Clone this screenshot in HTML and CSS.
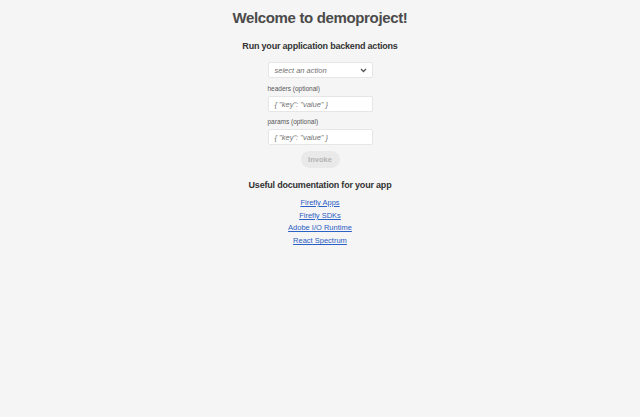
FILE: index.html
```html
<!DOCTYPE html>
<html>
<head>
<meta charset="utf-8">
<link rel="stylesheet" href="styles.css">
</head>
<body>
<main class="page">
  <h1 class="title">Welcome to demoproject!</h1>
  <h2 class="subtitle">Run your application backend actions</h2>
  <form class="form">
    <div class="select">
      <span class="placeholder">select an action</span>
      <svg class="chev" width="7" height="5" viewBox="0 0 7 5"><path d="M1 1l2.5 2.5L6 1" fill="none" stroke="#555" stroke-width="1.3"/></svg>
    </div>
    <label class="label first">headers (optional)</label>
    <div class="input"><span class="placeholder">{ "key": "value" }</span></div>
    <label class="label">params (optional)</label>
    <div class="input"><span class="placeholder">{ "key": "value" }</span></div>
    <button class="btn" type="button">Invoke</button>
  </form>
  <h2 class="subtitle docs">Useful documentation for your app</h2>
  <ul class="links">
    <li><a href="#">Firefly Apps</a></li>
    <li><a href="#">Firefly SDKs</a></li>
    <li><a href="#">Adobe I/O Runtime</a></li>
    <li><a href="#">React Spectrum</a></li>
  </ul>
</main>
</body>
</html>
```

FILE: styles.css
```css
html, body {
  margin: 0;
  padding: 0;
  background: #f5f5f5;
  font-family: "Liberation Sans", Arial, sans-serif;
  color: #4b4b4b;
}
.page {
  display: flex;
  flex-direction: column;
  align-items: center;
  padding-top: 8px;
}
.title {
  margin: 0;
  font-size: 15px;
  letter-spacing: -0.35px;
  font-weight: bold;
  line-height: 20px;
  color: #4b4b4b;
}
.subtitle {
  margin: 12px 0 0;
  font-size: 9px;
  letter-spacing: -0.2px;
  line-height: 12px;
  font-weight: bold;
  color: #333;
}
.form {
  display: flex;
  flex-direction: column;
  width: 105px;
  margin-top: 10px;
}
.select, .input {
  box-sizing: border-box;
  height: 16px;
  background: #fff;
  border: 1px solid #e6e6e6;
  border-radius: 2px;
  display: flex;
  align-items: center;
  padding: 0 6px;
}
.select {
  justify-content: space-between;
  padding-right: 5px;
}
.placeholder {
  font-size: 7.5px;
  font-style: italic;
  color: #707070;
}
.label {
  font-size: 6.5px;
  color: #555;
  line-height: 8px;
  margin-top: 6px;
  margin-bottom: 3px;
}
.label.first {
  margin-top: 7px;
}
.btn {
  align-self: center;
  margin-top: 6px;
  width: 39px;
  height: 17px;
  border: none;
  border-radius: 9px;
  background: #e9e9e9;
  color: #b3b3b3;
  font-family: inherit;
  font-size: 7.5px;
  font-weight: bold;
  padding: 0;
}
.docs {
  margin-top: 11px;
}
.links {
  list-style: none;
  margin: 6px 0 0;
  padding: 0;
  text-align: center;
}
.links li {
  font-size: 7.5px;
  line-height: 12.7px;
}
.links a {
  color: #2b60c4;
  text-decoration: underline;
}
```
